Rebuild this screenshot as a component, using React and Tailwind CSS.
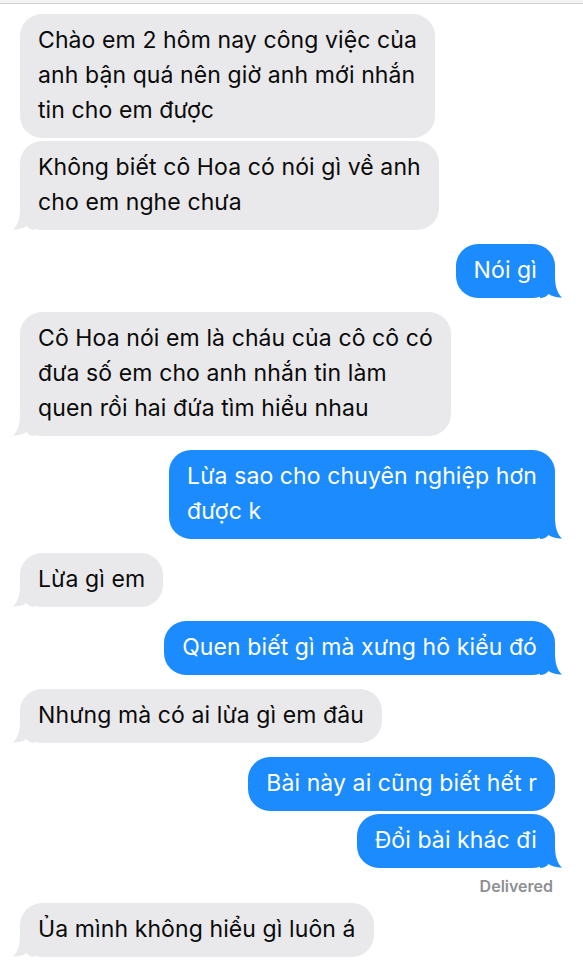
import React from 'react';

const messages = [
  { from: 'them', lines: ['Chào em 2 hôm nay công việc của', 'anh bận quá nên giờ anh mới nhắn', 'tin cho em được'], tail: false },
  { from: 'them', lines: ['Không biết cô Hoa có nói gì về anh', 'cho em nghe chưa'], tail: true },
  { from: 'me', lines: ['Nói gì'], tail: true },
  { from: 'them', lines: ['Cô Hoa nói em là cháu của cô cô có', 'đưa số em cho anh nhắn tin làm', 'quen rồi hai đứa tìm hiểu nhau'], tail: true },
  { from: 'me', lines: ['Lừa sao cho chuyên nghiệp hơn', 'được k'], tail: true },
  { from: 'them', lines: ['Lừa gì em'], tail: true },
  { from: 'me', lines: ['Quen biết gì mà xưng hô kiểu đó'], tail: true },
  { from: 'them', lines: ['Nhưng mà có ai lừa gì em đâu'], tail: true },
  { from: 'me', lines: ['Bài này ai cũng biết hết r'], tail: false },
  { from: 'me', lines: ['Đổi bài khác đi'], tail: true, delivered: true },
  { from: 'them', lines: ['Ủa mình không hiểu gì luôn á'], tail: true },
];

function Tail({ side }) {
  if (side === 'left') {
    return (
      <svg className="absolute bottom-0 left-[-7px] w-[22px] h-[22px]" viewBox="0 0 22 22">
        <path d="M7 0 C7 10 5 17 0 21.5 C5 21.8 10 20.5 13.5 18 C15.5 20.5 18.5 22 22 22 L22 0 Z" fill="#e9e9eb" />
      </svg>
    );
  }
  return (
    <svg className="absolute bottom-0 right-[-7px] w-[22px] h-[22px]" viewBox="0 0 22 22">
      <path d="M15 0 C15 10 17 17 22 21.5 C17 21.8 12 20.5 8.5 18 C6.5 20.5 3.5 22 0 22 L0 0 Z" fill="#1b8bfd" />
    </svg>
  );
}

function Bubble({ msg }) {
  const mine = msg.from === 'me';
  return (
    <div className={mine ? 'flex justify-end' : 'flex justify-start'}>
      <div
        className={
          mine
            ? 'relative w-fit rounded-[22px] bg-[#1b8bfd] text-white pl-[18px] pr-[18px] pt-[9px] pb-[10px]'
            : 'relative w-fit rounded-[22px] bg-[#e9e9eb] text-[#0a0a0a] pl-[18px] pr-[18px] pt-[9px] pb-[10px]'
        }
      >
        {msg.lines.map((line, i) => (
          <div key={i} className="whitespace-nowrap text-[23px] leading-[35px] tracking-[0.1px]">
            {line}
          </div>
        ))}
        {msg.tail && <Tail side={mine ? 'right' : 'left'} />}
      </div>
    </div>
  );
}

export default function App() {
  const rows = [];
  messages.forEach((msg, i) => {
    const prev = messages[i - 1];
    let gap = 'mt-[14px]';
    if (i === 0) gap = '';
    else if (prev.delivered) gap = 'mt-[8px]';
    else if (prev.from === msg.from) gap = 'mt-[3px]';
    rows.push(
      <div key={i} className={gap}>
        <Bubble msg={msg} />
        {msg.delivered && (
          <div className="flex justify-end pr-[2px] pt-[10px] text-[16px] leading-[17px] font-semibold text-[#8e8e93]">
            Delivered
          </div>
        )}
      </div>
    );
  });

  return (
    <div className="min-h-[969px] bg-white font-['Inter','Noto_Sans',sans-serif]">
      <div className="h-[4px] bg-[#f3f3f3] border-b border-[#cfcfcf]" />
      <div className="pl-[20px] pr-[28px] pt-[10px]">{rows}</div>
    </div>
  );
}
